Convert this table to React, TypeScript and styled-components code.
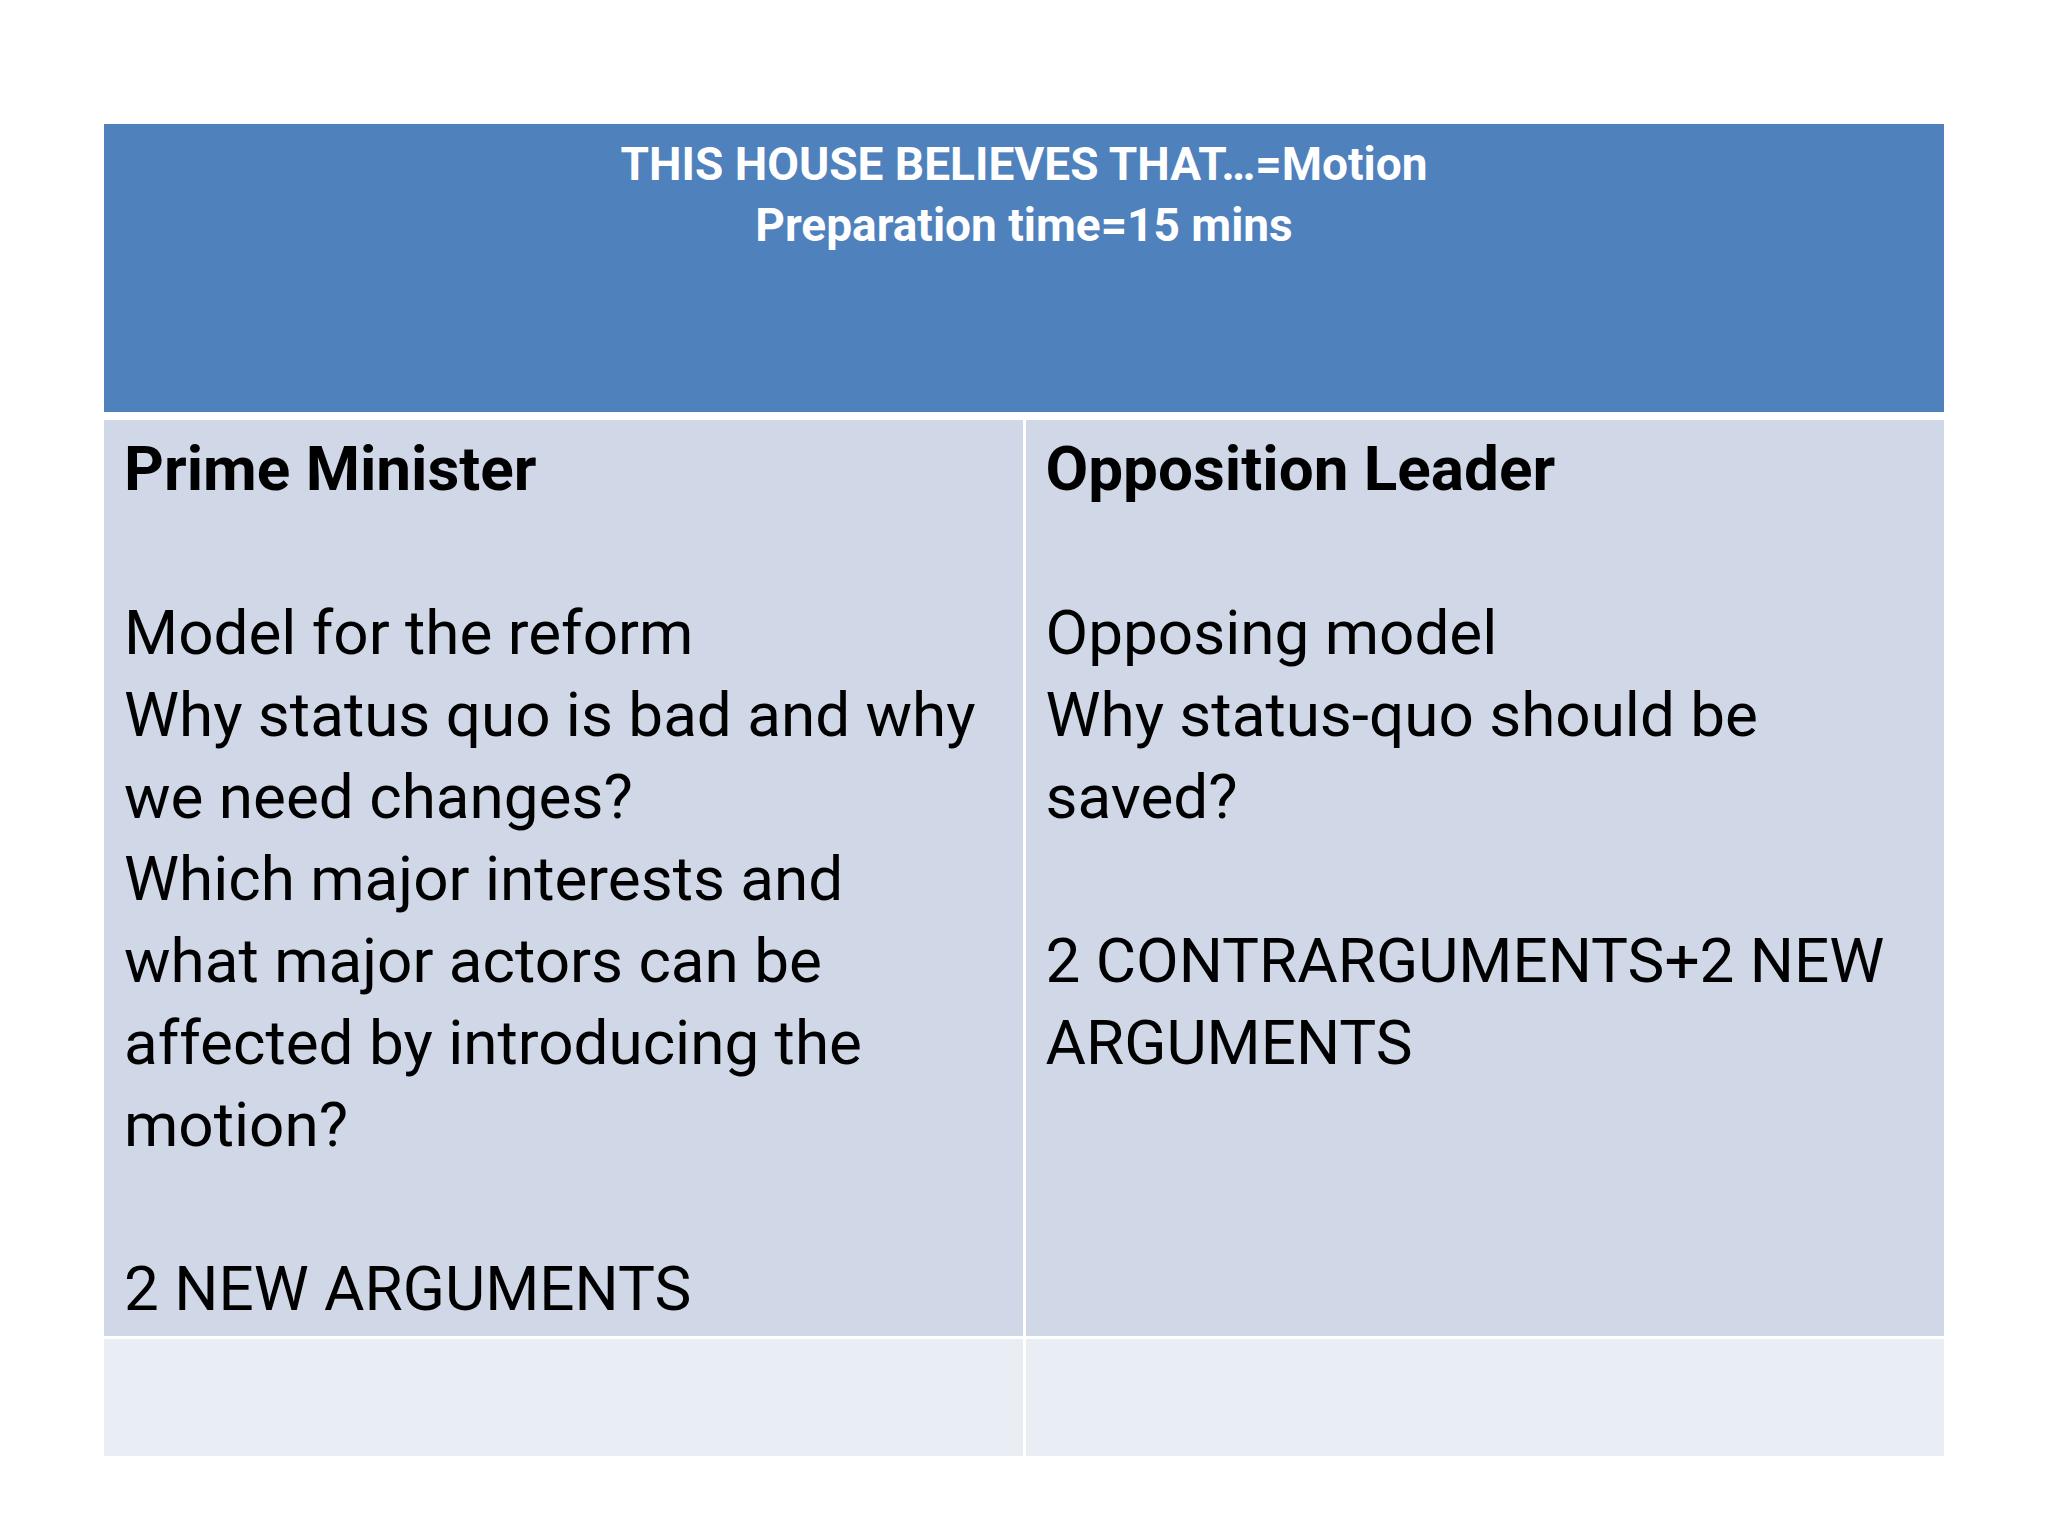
import * as React from 'react';
import styled, { createGlobalStyle } from 'styled-components';

const GlobalStyle = createGlobalStyle`
  html, body {
    margin: 0;
    padding: 0;
    background: #ffffff;
  }
  body {
    font-family: Roboto, "Liberation Sans", sans-serif;
  }
`;

const Slide = styled.div`
  width: 2048px;
  height: 1536px;
  box-sizing: border-box;
  padding: 124px 104px 0 104px;
  background: #ffffff;
`;

// header row track includes the thick white rule under it
const Table = styled.div`
  display: grid;
  grid-template-columns: 1fr 1fr;
  grid-template-rows: 293px 916px 117px;
  column-gap: 3px;
  row-gap: 3px;
  width: 1840px;
`;

const HeaderCell = styled.div`
  grid-column: 1 / span 2;
  margin-bottom: 5px;
  background: #4f81bd;
  color: #ffffff;
  font-weight: 700;
  font-size: 46px;
  line-height: 61px;
  text-align: center;
  padding-top: 10px;
  box-sizing: border-box;
`;

const Cell = styled.div<{ $light?: boolean }>`
  background: ${(p) => (p.$light ? '#e9edf4' : '#d0d8e8')};
  color: #000000;
  font-size: 62px;
  line-height: 82px;
  padding: 8px 20px 0 20px;
  box-sizing: border-box;
`;

const Heading = styled.div`
  font-weight: 700;
  white-space: nowrap;
`;

const Block = styled.div`
  margin-top: 82px;
`;

const Line = styled.div`
  white-space: nowrap;
`;

function HeaderText() {
  return (
    <HeaderCell>
      <Line>THIS HOUSE BELIEVES THAT…=Motion</Line>
      <Line>Preparation time=15 mins</Line>
    </HeaderCell>
  );
}

function RoleCell({ title, blocks }: { title: string; blocks: string[][] }) {
  return (
    <Cell>
      <Heading>{title}</Heading>
      {blocks.map((lines, i) => (
        <Block key={i}>
          {lines.map((l) => (
            <Line key={l}>{l}</Line>
          ))}
        </Block>
      ))}
    </Cell>
  );
}

function App() {
  return (
    <>
      <GlobalStyle />
      <Slide>
        <Table>
          <HeaderText />
          <RoleCell
            title="Prime Minister"
            blocks={[
              [
                'Model for the reform',
                'Why status quo is bad and why',
                'we need changes?',
                'Which major interests and',
                'what major actors can be',
                'affected by introducing the',
                'motion?',
              ],
              ['2 NEW ARGUMENTS'],
            ]}
          />
          <RoleCell
            title="Opposition Leader"
            blocks={[
              ['Opposing model', 'Why status-quo should be', 'saved?'],
              ['2 CONTRARGUMENTS+2 NEW', 'ARGUMENTS'],
            ]}
          />
          <Cell $light />
          <Cell $light />
        </Table>
      </Slide>
    </>
  );
}

export default App;
